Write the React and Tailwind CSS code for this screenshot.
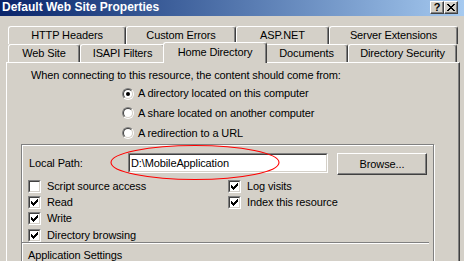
import React from "react";

function Tab({ className = "", children }) {
  return (
    <div
      className={
        "shrink-0 flex items-center justify-center border-l border-t border-r border-l-white border-t-white border-r-[#404040] rounded-t-[3px] shadow-[inset_-1px_0_0_#808080] bg-[#D4D0C8] " +
        className
      }
    >
      {children}
    </div>
  );
}

function Radio({ checked }) {
  return (
    <div className="w-[12px] h-[12px] shrink-0 rounded-full border border-t-[#808080] border-l-[#808080] border-b-white border-r-white">
      <div className="w-full h-full rounded-full border border-t-[#404040] border-l-[#404040] border-b-[#D4D0C8] border-r-[#D4D0C8] bg-white flex items-center justify-center">
        {checked && <div className="w-[4px] h-[4px] rounded-full bg-black" />}
      </div>
    </div>
  );
}

function Check({ checked }) {
  const px = [
    [6, 0], [5, 1], [6, 1], [0, 2], [4, 2], [5, 2], [6, 2],
    [0, 3], [1, 3], [3, 3], [4, 3], [5, 3],
    [0, 4], [1, 4], [2, 4], [3, 4], [4, 4],
    [1, 5], [2, 5], [3, 5], [2, 6],
  ];
  return (
    <div className="w-[13px] h-[13px] shrink-0 border border-t-[#808080] border-l-[#808080] border-b-white border-r-white">
      <div className="w-full h-full border border-t-[#404040] border-l-[#404040] border-b-[#D4D0C8] border-r-[#D4D0C8] bg-white flex items-center justify-center">
        {checked && (
          <svg width="7" height="7" viewBox="0 0 7 7" shapeRendering="crispEdges">
            {px.map(([x, y]) => (
              <rect key={x + "-" + y} x={x} y={y} width="1" height="1" fill="#000" />
            ))}
          </svg>
        )}
      </div>
    </div>
  );
}

function CapBtn({ children }) {
  return (
    <div className="w-[14px] h-[13px] bg-[#D4D0C8] border-t border-l border-t-white border-l-white border-r border-b border-r-[#404040] border-b-[#404040] shadow-[inset_-1px_-1px_0_#808080] flex items-center justify-center">
      {children}
    </div>
  );
}

export default function App() {
  return (
    <div className="relative w-[464px] h-[261px] overflow-hidden bg-[#D4D0C8] font-['Liberation_Sans',Arial,sans-serif] text-[11px] leading-[13px] tracking-[-0.12px] text-black">
      {/* Title bar */}
      <div className="h-[16px] flex items-start bg-gradient-to-r from-[#0A246A] to-[#A6CAF0]">
        <span className="pl-[2px] text-white font-bold text-[12px] leading-[15px] tracking-normal">
          Default Web Site Properties
        </span>
        <div className="ml-auto mr-[6px] mt-[1px] flex">
          <CapBtn>
            <span className="font-bold text-[11px] leading-[11px]">?</span>
          </CapBtn>
          <CapBtn>
            <svg width="8" height="7" viewBox="0 0 8 7" shapeRendering="crispEdges">
              {[0, 1, 2, 3, 4, 5, 6].map((i) => (
                <g key={i}>
                  <rect x={i} y={i} width="2" height="1" fill="#000" />
                  <rect x={6 - i} y={i} width="2" height="1" fill="#000" />
                </g>
              ))}
            </svg>
          </CapBtn>
        </div>
      </div>

      {/* Tabs */}
      <div className="mt-[10px] pl-[8px] flex h-[18px]">
        <Tab className="w-[118px] h-[18px]">HTTP Headers</Tab>
        <Tab className="w-[110px] h-[18px]">Custom Errors</Tab>
        <Tab className="w-[93px] h-[18px]">ASP.NET</Tab>
        <Tab className="w-[129px] h-[18px]">Server Extensions</Tab>
      </div>
      <div className="pl-[8px] flex h-[18px]">
        <Tab className="w-[72px] h-[18px]">Web Site</Tab>
        <Tab className="w-[85px] h-[18px]">ISAPI Filters</Tab>
        <Tab className="relative z-10 w-[104px] h-[21px] -mx-[2px] -mt-[2px] pb-[2px]">Home Directory</Tab>
        <Tab className="w-[83px] h-[18px]">Documents</Tab>
        <Tab className="w-[109px] h-[18px]">Directory Security</Tab>
      </div>

      {/* Panel */}
      <div className="ml-[6px] w-[454px] h-[220px] border-l border-t border-r border-l-white border-t-white border-r-[#404040] shadow-[inset_-1px_0_0_#808080]">
        <div className="pl-[24px] mt-[6px]">When connecting to this resource, the content should come from:</div>
        <div className="mt-[2px] pl-[115px] flex flex-col">
          <div className="h-[19px] flex items-center gap-[4px]">
            <Radio checked />
            <span>A directory located on this computer</span>
          </div>
          <div className="h-[20px] flex items-center gap-[4px]">
            <Radio />
            <span>A share located on another computer</span>
          </div>
          <div className="h-[20px] flex items-center gap-[4px]">
            <Radio />
            <span>A redirection to a URL</span>
          </div>
        </div>

        {/* Group box */}
        <div className="mt-[1px] ml-[14px] w-[413px] h-[140px] border border-[#808080] shadow-[inset_1px_1px_0_#fff,1px_1px_0_#fff]">
          <div className="mt-[8px] pl-[7px] flex items-start h-[22px]">
            <div className="w-[99px] h-[20px] flex items-center">Local Path:</div>
            <div className="w-[200px] h-[20px] border border-t-[#808080] border-l-[#808080] border-b-white border-r-white">
              <div className="w-full h-full border border-t-[#404040] border-l-[#404040] border-b-[#D4D0C8] border-r-[#D4D0C8] bg-white flex items-center pl-[1px]">
                D:\MobileApplication
              </div>
            </div>
            <div className="ml-[9px] w-[90px] h-[22px] border-t border-l border-t-white border-l-white border-r border-b border-r-[#404040] border-b-[#404040] shadow-[inset_-1px_-1px_0_#808080] flex items-center justify-center">
              Browse...
            </div>
          </div>

          <div className="mt-[5px] pl-[6px] flex">
            <div className="w-[200px] flex flex-col">
              <div className="h-[16px] flex items-start gap-[6px]">
                <Check />
                <span>Script source access</span>
              </div>
              <div className="h-[16px] flex items-start gap-[6px]">
                <Check checked />
                <span>Read</span>
              </div>
              <div className="h-[17px] flex items-start gap-[6px]">
                <Check checked />
                <span>Write</span>
              </div>
              <div className="h-[14px] flex items-start gap-[6px]">
                <Check checked />
                <span>Directory browsing</span>
              </div>
            </div>
            <div className="flex flex-col">
              <div className="h-[16px] flex items-start gap-[6px]">
                <Check checked />
                <span>Log visits</span>
              </div>
              <div className="h-[16px] flex items-start gap-[6px]">
                <Check checked />
                <span>Index this resource</span>
              </div>
            </div>
          </div>

          <div className="mt-[-1px] w-[407px] h-[2px] border-t border-t-[#808080] border-b border-b-white" />
          <div className="mt-[5px] pl-[6px]">Application Settings</div>
        </div>
      </div>

      {/* Red annotation ellipse */}
      <svg className="absolute left-0 top-0 pointer-events-none" width="464" height="261">
        <ellipse cx="195" cy="162.5" rx="84" ry="17" fill="none" stroke="#ff0000" strokeWidth="1.1" />
      </svg>
    </div>
  );
}
